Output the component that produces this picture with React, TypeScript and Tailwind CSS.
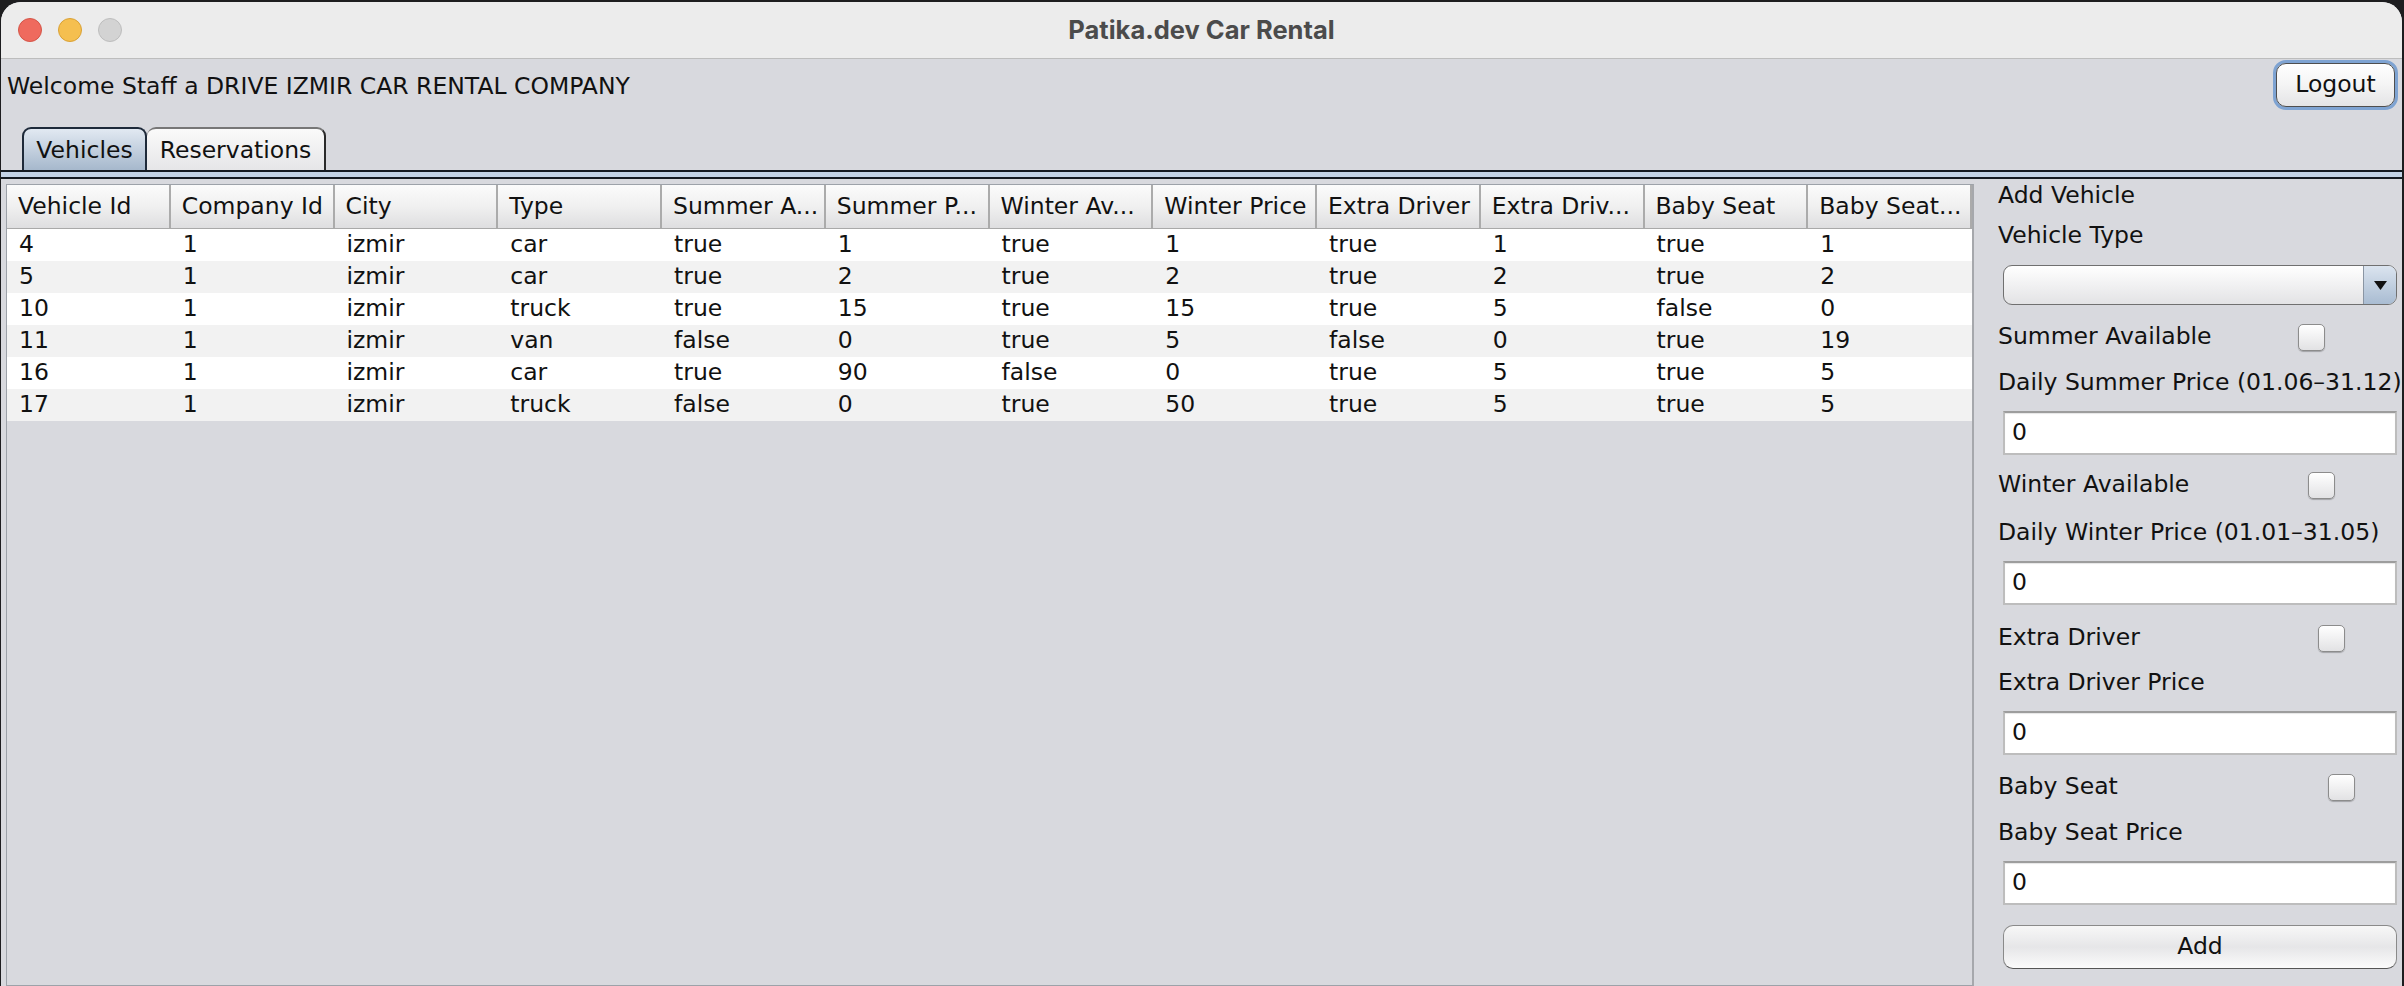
import React from "react";

const columns = [
	"Vehicle Id",
	"Company Id",
	"City",
	"Type",
	"Summer A...",
	"Summer P...",
	"Winter Av...",
	"Winter Price",
	"Extra Driver",
	"Extra Driv...",
	"Baby Seat",
	"Baby Seat...",
];

const rows = [
	["4", "1", "izmir", "car", "true", "1", "true", "1", "true", "1", "true", "1"],
	["5", "1", "izmir", "car", "true", "2", "true", "2", "true", "2", "true", "2"],
	["10", "1", "izmir", "truck", "true", "15", "true", "15", "true", "5", "false", "0"],
	["11", "1", "izmir", "van", "false", "0", "true", "5", "false", "0", "true", "19"],
	["16", "1", "izmir", "car", "true", "90", "false", "0", "true", "5", "true", "5"],
	["17", "1", "izmir", "truck", "false", "0", "true", "50", "true", "5", "true", "5"],
];

function Checkbox() {
	return (
		<span className="block w-[27px] h-[27px] rounded-[5px] border border-[#8c8c8c] bg-gradient-to-b from-[#ffffff] to-[#e2e2e4] shadow-[0_1px_1px_rgba(0,0,0,0.25)]"></span>
	);
}

function TextField() {
	return (
		<div className="ml-[5px] w-[394px] h-[44px] shrink-0 bg-white border-2 border-[#bdbdbd] border-t-[#9d9d9d] flex items-center pl-[7px] shadow-[inset_0_1px_1px_rgba(0,0,0,0.1)]">
			0
		</div>
	);
}

function CheckRow({ label, labelClass, className }: { label: string; labelClass: string; className: string }) {
	return (
		<div className={"flex items-center h-[30px] shrink-0 " + className}>
			<span className={labelClass}>{label}</span>
			<Checkbox />
		</div>
	);
}

export default function App() {
	return (
		<div className="w-[2404px] h-[986px] bg-[#1d1d1f] overflow-hidden pt-[2px] pl-[1px] font-['DejaVu_Sans',sans-serif] text-[23.5px] text-[#111]">
			<div className="w-[2401px] h-[984px] rounded-t-[20px] overflow-hidden flex flex-col bg-[#d8d9de]">
				{/* title bar */}
				<div className="h-[57px] shrink-0 bg-[#ececec] border-b border-[#bdbdbd] grid grid-cols-[1fr_auto_1fr] items-center">
					<div className="flex items-center gap-[16px] pl-[17px]">
						<span className="w-[24px] h-[24px] rounded-full bg-[#ef6a5e] border border-[#d45548]"></span>
						<span className="w-[24px] h-[24px] rounded-full bg-[#f5bf4f] border border-[#d9a136]"></span>
						<span className="w-[24px] h-[24px] rounded-full bg-[#d3d3d3] border border-[#bdbdbd]"></span>
					</div>
					<div className="font-['Inter',sans-serif] font-bold text-[25.5px] text-[#4b4b4b]">Patika.dev Car Rental</div>
					<div></div>
				</div>

				{/* welcome + logout */}
				<div className="h-[68px] shrink-0 flex justify-between items-start">
					<div className="pl-[6px] mt-[12px] leading-[30px]">Welcome Staff a DRIVE IZMIR CAR RENTAL COMPANY</div>
					<div className="mr-[4px] mt-[1px] rounded-[13px] border-[3px] border-[#7ea3d2] p-0">
						<button className="w-[119px] h-[44px] rounded-[10px] border border-[#4e4e4e] bg-gradient-to-b from-[#ffffff] via-[#f4f4f4] to-[#e4e4e6] flex items-center justify-center">
							Logout
						</button>
					</div>
				</div>

				{/* tabs */}
				<div className="h-[43px] shrink-0 flex items-end pl-[21px]">
					<div className="h-[43px] w-[125px] pt-[2px] rounded-t-[9px] border-2 border-b-0 border-[#1e2a3a] bg-gradient-to-b from-[#e2e9f2] to-[#a6b8cc] flex items-center justify-center">
						Vehicles
					</div>
					<div className="h-[43px] w-[179px] pt-[2px] rounded-t-[9px] border-2 border-b-0 border-[#2a2a2a] border-t-[#777] border-l-0 bg-gradient-to-b from-[#fafafa] to-[#e6e6e8] flex items-center justify-center">
						Reservations
					</div>
				</div>
				<div className="shrink-0 h-[9px] border-t-2 border-b-2 border-[#141a22] bg-[#c3d3e7]"></div>

				{/* content */}
				<div className="flex-1 flex min-h-0">
					<div className="ml-[5px] mt-[5px] w-[1968px] border border-[#9da2a9] border-r-[2px] border-r-[#a6a8ac] flex flex-col">
						<div className="h-[44px] shrink-0 grid grid-cols-12 bg-gradient-to-b from-[#fbfbfb] via-[#f0f0f0] to-[#dedee0] border-b border-[#a9a9a9]">
							{columns.map((c) => (
								<div key={c} className="flex items-center pl-[11px] border-r-2 border-[#ababab] whitespace-nowrap overflow-hidden">
									{c}
								</div>
							))}
						</div>
						{rows.map((r, i) => (
							<div key={i} className={"h-[32px] shrink-0 grid grid-cols-12 " + (i % 2 === 0 ? "bg-white" : "bg-[#f2f2f2]")}>
								{r.map((v, j) => (
									<div key={j} className="flex items-center pl-[12px] whitespace-nowrap overflow-hidden">
										{v}
									</div>
								))}
							</div>
						))}
					</div>

					{/* add vehicle form */}
					<div className="flex-1 flex flex-col pl-[24px] pt-[1px]">
						<div className="h-[30px] shrink-0 leading-[30px]">Add Vehicle</div>
						<div className="h-[30px] shrink-0 leading-[30px] mt-[10px]">Vehicle Type</div>
						<div className="ml-[5px] mt-[15px] w-[394px] h-[40px] shrink-0 rounded-[9px] border border-[#707070] bg-gradient-to-b from-[#ffffff] to-[#e3e3e5] flex overflow-hidden">
							<div className="flex-1"></div>
							<div className="w-[33px] border-l border-[#8a95a3] bg-gradient-to-b from-[#dbe4ef] to-[#a9bcd2] flex items-center justify-center">
								<svg width="13" height="9" viewBox="0 0 13 9">
									<path d="M0 0 L13 0 L6.5 9 Z" fill="#111" />
								</svg>
							</div>
						</div>
						<CheckRow label="Summer Available" labelClass="w-[300px]" className="mt-[17px]" />
						<div className="h-[30px] shrink-0 leading-[30px] mt-[15px] whitespace-nowrap">Daily Summer Price (01.06–31.12)</div>
						<div className="mt-[14px] shrink-0"><TextField /></div>
						<CheckRow label="Winter Available" labelClass="w-[310px]" className="mt-[15px]" />
						<div className="h-[30px] shrink-0 leading-[30px] mt-[17px] whitespace-nowrap">Daily Winter Price (01.01–31.05)</div>
						<div className="mt-[14px] shrink-0"><TextField /></div>
						<CheckRow label="Extra Driver" labelClass="w-[320px]" className="mt-[18px]" />
						<div className="h-[30px] shrink-0 leading-[30px] mt-[14px]">Extra Driver Price</div>
						<div className="mt-[14px] shrink-0"><TextField /></div>
						<CheckRow label="Baby Seat" labelClass="w-[330px]" className="mt-[17px]" />
						<div className="h-[30px] shrink-0 leading-[30px] mt-[15px]">Baby Seat Price</div>
						<div className="mt-[14px] shrink-0"><TextField /></div>
						<button className="ml-[5px] mt-[20px] w-[394px] h-[44px] shrink-0 rounded-[10px] border border-[#8a8a8a] border-b-[#555] bg-gradient-to-b from-[#f7f7f7] via-[#e6e6e8] to-[#fbfbfb] flex items-center justify-center">
							Add
						</button>
					</div>
				</div>
			</div>
		</div>
	);
}
